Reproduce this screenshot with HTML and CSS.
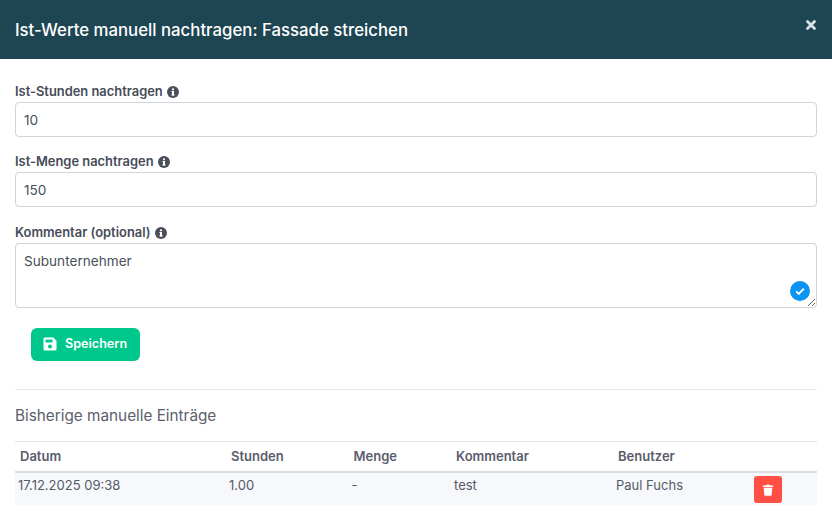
FILE: index.html
```html
<!DOCTYPE html>
<html lang="de">
<head>
<meta charset="utf-8">
<title>Ist-Werte manuell nachtragen</title>
<link rel="stylesheet" href="styles.css">
</head>
<body>
<div class="modal">
  <header class="modal-head">
    <h1>Ist-Werte manuell nachtragen: Fassade streichen</h1>
    <button class="close" aria-label="Schließen"><svg viewBox="0 0 12 12" width="12" height="12"><path d="M2.500 2.500l7 7M9.500 2.500l-7 7" stroke="#d9e2e6" stroke-width="2.800" stroke-linecap="round" fill="none"/></svg></button>
  </header>
  <main class="modal-body">
    <div class="field">
      <label>Ist-Stunden nachtragen <svg class="info" viewBox="0 0 12 12"><circle cx="6" cy="6" r="6" fill="#4a4f5a"/><rect x="5" y="5" width="2" height="4.4" fill="#fff"/><rect x="4.4" y="8.4" width="3.2" height="1.1" fill="#fff"/><rect x="4.4" y="5" width="1.5" height="1" fill="#fff"/><circle cx="6" cy="3.3" r="1.1" fill="#fff"/></svg></label>
      <input class="control" type="text" value="10">
    </div>
    <div class="field">
      <label>Ist-Menge nachtragen <svg class="info" viewBox="0 0 12 12"><circle cx="6" cy="6" r="6" fill="#4a4f5a"/><rect x="5" y="5" width="2" height="4.4" fill="#fff"/><rect x="4.4" y="8.4" width="3.2" height="1.1" fill="#fff"/><rect x="4.4" y="5" width="1.5" height="1" fill="#fff"/><circle cx="6" cy="3.3" r="1.1" fill="#fff"/></svg></label>
      <input class="control" type="text" value="150">
    </div>
    <div class="field">
      <label>Kommentar (optional) <svg class="info" viewBox="0 0 12 12"><circle cx="6" cy="6" r="6" fill="#4a4f5a"/><rect x="5" y="5" width="2" height="4.4" fill="#fff"/><rect x="4.4" y="8.4" width="3.2" height="1.1" fill="#fff"/><rect x="4.4" y="5" width="1.5" height="1" fill="#fff"/><circle cx="6" cy="3.3" r="1.1" fill="#fff"/></svg></label>
      <div class="area-wrap">
        <textarea class="control area">Subunternehmer</textarea>
        <span class="check"><svg viewBox="0 0 20 20" width="20" height="20"><circle cx="10" cy="10" r="10" fill="#0a95f2"/><path d="M6.2 10.4l2.6 2.5 5-5.2" stroke="#fff" stroke-width="1.9" fill="none"/></svg></span>
      </div>
    </div>
    <div class="actions">
      <button class="save"><svg viewBox="0 0 14 14" width="14" height="14"><path fill-rule="evenodd" d="M2 0.5h8.2L13.5 3.8V12a1.5 1.5 0 0 1-1.5 1.5H2A1.5 1.5 0 0 1 .5 12V2A1.5 1.5 0 0 1 2 .5zM2.5 2.5v3h7v-3zM7 7.6a2 2 0 1 0 0 4 2 2 0 0 0 0-4z" fill="#fff"/></svg>Speichern</button>
    </div>
    <hr class="rule">
    <h2>Bisherige manuelle Einträge</h2>
    <table class="entries">
      <colgroup><col class="c1"><col class="c2"><col class="c3"><col class="c4"><col class="c5"><col></colgroup>
      <thead>
        <tr><th>Datum</th><th>Stunden</th><th>Menge</th><th>Kommentar</th><th>Benutzer</th><th></th></tr>
      </thead>
      <tbody>
        <tr>
          <td>17.12.2025 09:38</td><td>1.00</td><td>-</td><td>test</td><td>Paul Fuchs</td>
          <td class="act"><button class="del" aria-label="Löschen"><svg viewBox="0 0 12 12" width="12" height="12"><path d="M1 1.6h3l.4-.8h3.2l.4.8h3v1.4H1zM1.7 3.8h8.6l-.6 7a1 1 0 0 1-1 .9H3.300a1 1 0 0 1-1-.9z" fill="#fff"/></svg></button></td>
        </tr>
      </tbody>
    </table>
  </main>
</div>
</body>
</html>
```
FILE: styles.css
```css
* { box-sizing: border-box; }
html, body { margin: 0; padding: 0; background: #fff; }
body { font-family: Inter, "Noto Sans", sans-serif; color: #4a4f5a; width: 832px; height: 526px; overflow: hidden; }
.modal-head { height: 59px; background: #1e4552; display: flex; align-items: center; justify-content: space-between; padding: 0 15px; }
.modal-head h1 { margin: 0; color: #fff; font-size: 16.8px; font-weight: 500; line-height: 20px; }
.close { border: 0; background: none; padding: 0; width: 12px; height: 12px; display: flex; margin: -9px 0 0 0; }
.modal-body { padding: 25px 15px 0; }
.field { margin-bottom: 17.4px; }
.field label { display: flex; align-items: center; gap: 4px; font-size: 12.9px; font-weight: 600; line-height: 16px; height: 18px; padding-bottom: 2px; color: #474c57; }
.info { width: 12px; height: 12px; }
.control { display: block; width: 100%; height: 35px; border: 1px solid #ced4da; border-radius: 4px; padding: 0 8px; font: 400 13.6px/19px Inter, sans-serif; color: #4a4f5a; background: #fff; outline: 0; margin: 0; }
.area-wrap { position: relative; height: 65px; }
.area { height: 65px; padding: 8px; resize: vertical; }
.check { position: absolute; right: 7px; bottom: 7px; width: 20px; height: 20px; display: flex; }
.actions { padding: 2.800px 16px 0; }
.save { display: flex; align-items: center; gap: 8px; width: 109px; height: 33px; padding: 0 12px; background: #00c88c; border: 0; border-radius: 6px; color: #fff; font: 600 12.6px/18px Inter, sans-serif; }
.rule { border: 0; border-top: 1px solid #e4e6ea; margin: 28px 0 0; }
h2 { margin: 16px 0 0; font-size: 15.3px; font-weight: 400; line-height: 20px; color: #5a5f6b; }
.entries { width: 802px; margin-top: 15px; border-collapse: collapse; table-layout: fixed; font-size: 13px; }
.c1 { width: 211px; } .c2 { width: 122.500px; } .c3 { width: 102.500px; } .c4 { width: 162px; } .c5 { width: 136px; }
.entries th { text-align: left; font-weight: 600; color: #5a5d6b; height: 31px; padding: 0 5px 1px; border-top: 1px solid #e2e2ea; border-bottom: 2px solid #dddde8; line-height: 18px; }
.entries td { padding: 3px 3px 0; height: 33px; vertical-align: top; background: #f7f8fc; line-height: 18px; color: #555a66; }
.entries td.act { padding: 3px 0 0 5px; }
.del { display: flex; align-items: center; justify-content: center; width: 28px; height: 27px; padding: 0; border: 0; border-radius: 3px; background: #ff5043; }
```
